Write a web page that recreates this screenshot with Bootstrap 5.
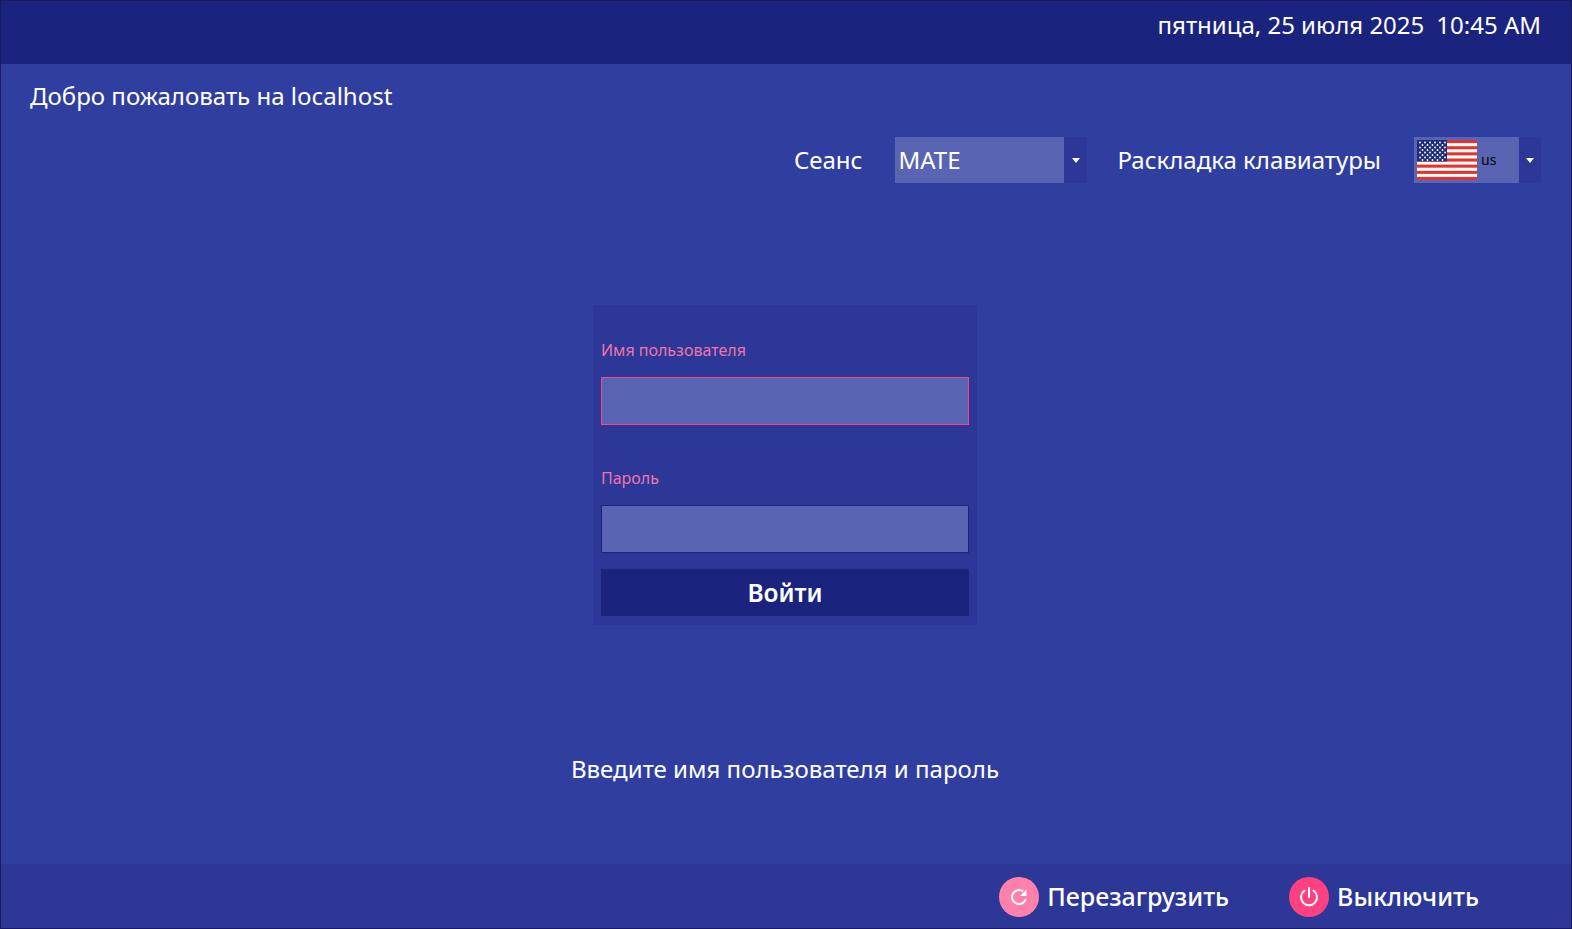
<!DOCTYPE html>
<html lang="ru">
<head>
<meta charset="utf-8">
<title>Login</title>
<link href="https://cdn.jsdelivr.net/npm/bootstrap@5.3.0/dist/css/bootstrap.min.css" rel="stylesheet">
<style>
html,body{height:100%;}
body{font-family:"Noto Sans","Open Sans",sans-serif;background:#303f9f;color:#fff;overflow:hidden;}
.frame{height:929px;border:1px solid #1a1a5c;}
.topbar{height:63px;background:#1a237e;font-size:24px;line-height:33px;padding:7px 30px 0 0;}
.topbar span+span{margin-left:12px;}
.welcome{font-size:24.05px;line-height:33px;padding:15px 0 0 29px;height:73px;}
.optrow{height:46px;font-size:24px;padding-right:30px;}
.optrow label{margin-bottom:0;}
.combo{display:flex;height:46px;background:#2c3797;}
.combo-field{background:#5965b2;height:46px;}
.combo-arrow{width:23px;}
.combo-arrow i{display:block;width:0;height:0;border-left:4.5px solid transparent;border-right:4.5px solid transparent;border-top:5px solid #fff;}
.sess .combo-field{width:169px;padding-left:3px;line-height:46px;}
.sess{margin-left:33px;width:192px;}
.optrow .kbd-label{margin-left:30px;}
.kbd{margin-left:33px;width:127px;}
.kbd .combo-field{width:105px;padding:3px 0 0 3px;font-size:14px;color:#000;line-height:40px;}
.kbd .combo-arrow{width:22px;}
.kbd svg{display:block;flex:none;margin-right:4px;}
.stage{flex:1 1 auto;padding:122px 2px 0 0;}
.panel{width:384px;height:320px;background:#2c3797;padding:29px 8px 0;}
.fld-label{display:block;color:#ec75ab;font-size:16px;line-height:22px;height:22px;margin:5px 0 16px;}
.fld{display:block;width:100%;height:48px;background:#5965b2;border:1px solid #1a237e;border-radius:0;padding:0 4px;color:#fff;}
.fld.active{border-color:#ff4081;}
.fld:focus{outline:none;box-shadow:none;}
.gap1{height:37px;}
.signin{display:block;width:100%;height:47px;margin-top:16px;background:#1a237e;color:#fff;border:0;border-radius:0;font-size:24.5px;font-weight:600;line-height:47px;padding:0;}
.hint{font-size:24.05px;line-height:33px;margin-top:127px;}
.bottombar{height:64px;background:#2c3797;font-size:25px;font-weight:500;padding:2px 92px 0 0;}
.act{display:flex;align-items:center;}
.act+.act{margin-left:60px;}
.act .ico{width:40px;height:40px;border-radius:50%;margin-right:8px;display:flex;align-items:center;justify-content:center;flex:none;}
.ico-r{background:#ff80ab;}
.ico-p{background:#ff4081;}
</style>
</head>
<body>
<div class="frame d-flex flex-column">
  <div class="topbar d-flex justify-content-end"><span>пятница, 25 июля 2025</span><span>10:45 AM</span></div>
  <div class="welcome">Добро пожаловать на localhost</div>
  <div class="optrow d-flex justify-content-end align-items-center">
    <label>Сеанс</label>
    <div class="combo sess">
      <div class="combo-field">MATE</div>
      <div class="combo-arrow d-flex align-items-center justify-content-center"><i></i></div>
    </div>
    <label class="kbd-label">Раскладка клавиатуры</label>
    <div class="combo kbd">
      <div class="combo-field d-flex">
        <svg width="60" height="40" viewBox="0 0 60 40">
          <rect width="60" height="40" fill="#fff"/>
          <g fill="#e2342d">
            <rect y="0" width="60" height="3.1"/><rect y="6.2" width="60" height="3.1"/><rect y="12.3" width="60" height="3.1"/><rect y="18.5" width="60" height="3.1"/><rect y="24.6" width="60" height="3.1"/><rect y="30.8" width="60" height="3.1"/><rect y="36.9" width="60" height="3.1"/>
          </g>
          <rect width="30" height="21.5" fill="#1f2c7c"/>
          <g fill="#fff">
            <circle cx="3" cy="2.5" r=".9"/><circle cx="8" cy="2.5" r=".9"/><circle cx="13" cy="2.5" r=".9"/><circle cx="18" cy="2.5" r=".9"/><circle cx="23" cy="2.5" r=".9"/><circle cx="28" cy="2.5" r=".9"/>
            <circle cx="5.500" cy="5" r=".9"/><circle cx="10.500" cy="5" r=".9"/><circle cx="15.500" cy="5" r=".9"/><circle cx="20.500" cy="5" r=".9"/><circle cx="25.500" cy="5" r=".9"/>
            <circle cx="3" cy="7.500" r=".9"/><circle cx="8" cy="7.500" r=".9"/><circle cx="13" cy="7.500" r=".9"/><circle cx="18" cy="7.500" r=".9"/><circle cx="23" cy="7.500" r=".9"/><circle cx="28" cy="7.500" r=".9"/>
            <circle cx="5.500" cy="10" r=".9"/><circle cx="10.500" cy="10" r=".9"/><circle cx="15.500" cy="10" r=".9"/><circle cx="20.500" cy="10" r=".9"/><circle cx="25.500" cy="10" r=".9"/>
            <circle cx="3" cy="12.500" r=".9"/><circle cx="8" cy="12.500" r=".9"/><circle cx="13" cy="12.500" r=".9"/><circle cx="18" cy="12.500" r=".9"/><circle cx="23" cy="12.500" r=".9"/><circle cx="28" cy="12.500" r=".9"/>
            <circle cx="5.500" cy="15" r=".9"/><circle cx="10.500" cy="15" r=".9"/><circle cx="15.500" cy="15" r=".9"/><circle cx="20.500" cy="15" r=".9"/><circle cx="25.500" cy="15" r=".9"/>
            <circle cx="3" cy="17.500" r=".9"/><circle cx="8" cy="17.500" r=".9"/><circle cx="13" cy="17.500" r=".9"/><circle cx="18" cy="17.500" r=".9"/><circle cx="23" cy="17.500" r=".9"/><circle cx="28" cy="17.500" r=".9"/>
            <circle cx="5.500" cy="20" r=".9"/><circle cx="10.500" cy="20" r=".9"/><circle cx="15.500" cy="20" r=".9"/><circle cx="20.500" cy="20" r=".9"/><circle cx="25.500" cy="20" r=".9"/>
          </g>
        </svg>
        <span>us</span>
      </div>
      <div class="combo-arrow d-flex align-items-center justify-content-center"><i></i></div>
    </div>
  </div>
  <div class="stage d-flex flex-column align-items-center">
    <form class="panel">
      <label class="fld-label">Имя пользователя</label>
      <input class="fld active" type="text" aria-label="Имя пользователя">
      <div class="gap1"></div>
      <label class="fld-label">Пароль</label>
      <input class="fld" type="password" aria-label="Пароль">
      <button class="btn signin" type="button">Войти</button>
    </form>
    <div class="hint">Введите имя пользователя и пароль</div>
  </div>
  <div class="bottombar d-flex justify-content-end align-items-center">
    <div class="act"><span class="ico ico-r">
      <svg width="20" height="20" viewBox="0 0 20 20" fill="none"><path d="M16.700 12.300A7 7 0 1 1 14.200 4.400" stroke="#fff" stroke-width="2"/><path d="M17.500 2.500v6.500h-6.500z" fill="#fff"/></svg>
    </span>Перезагрузить</div>
    <div class="act"><span class="ico ico-p">
      <svg width="22" height="22" viewBox="0 0 22 22" fill="none"><path d="M11 2v9" stroke="#fff" stroke-width="2" stroke-linecap="round"/><path d="M6.500 4.700a8 8 0 1 0 9 0" stroke="#fff" stroke-width="2" stroke-linecap="round"/></svg>
    </span>Выключить</div>
  </div>
</div>
</body>
</html>
